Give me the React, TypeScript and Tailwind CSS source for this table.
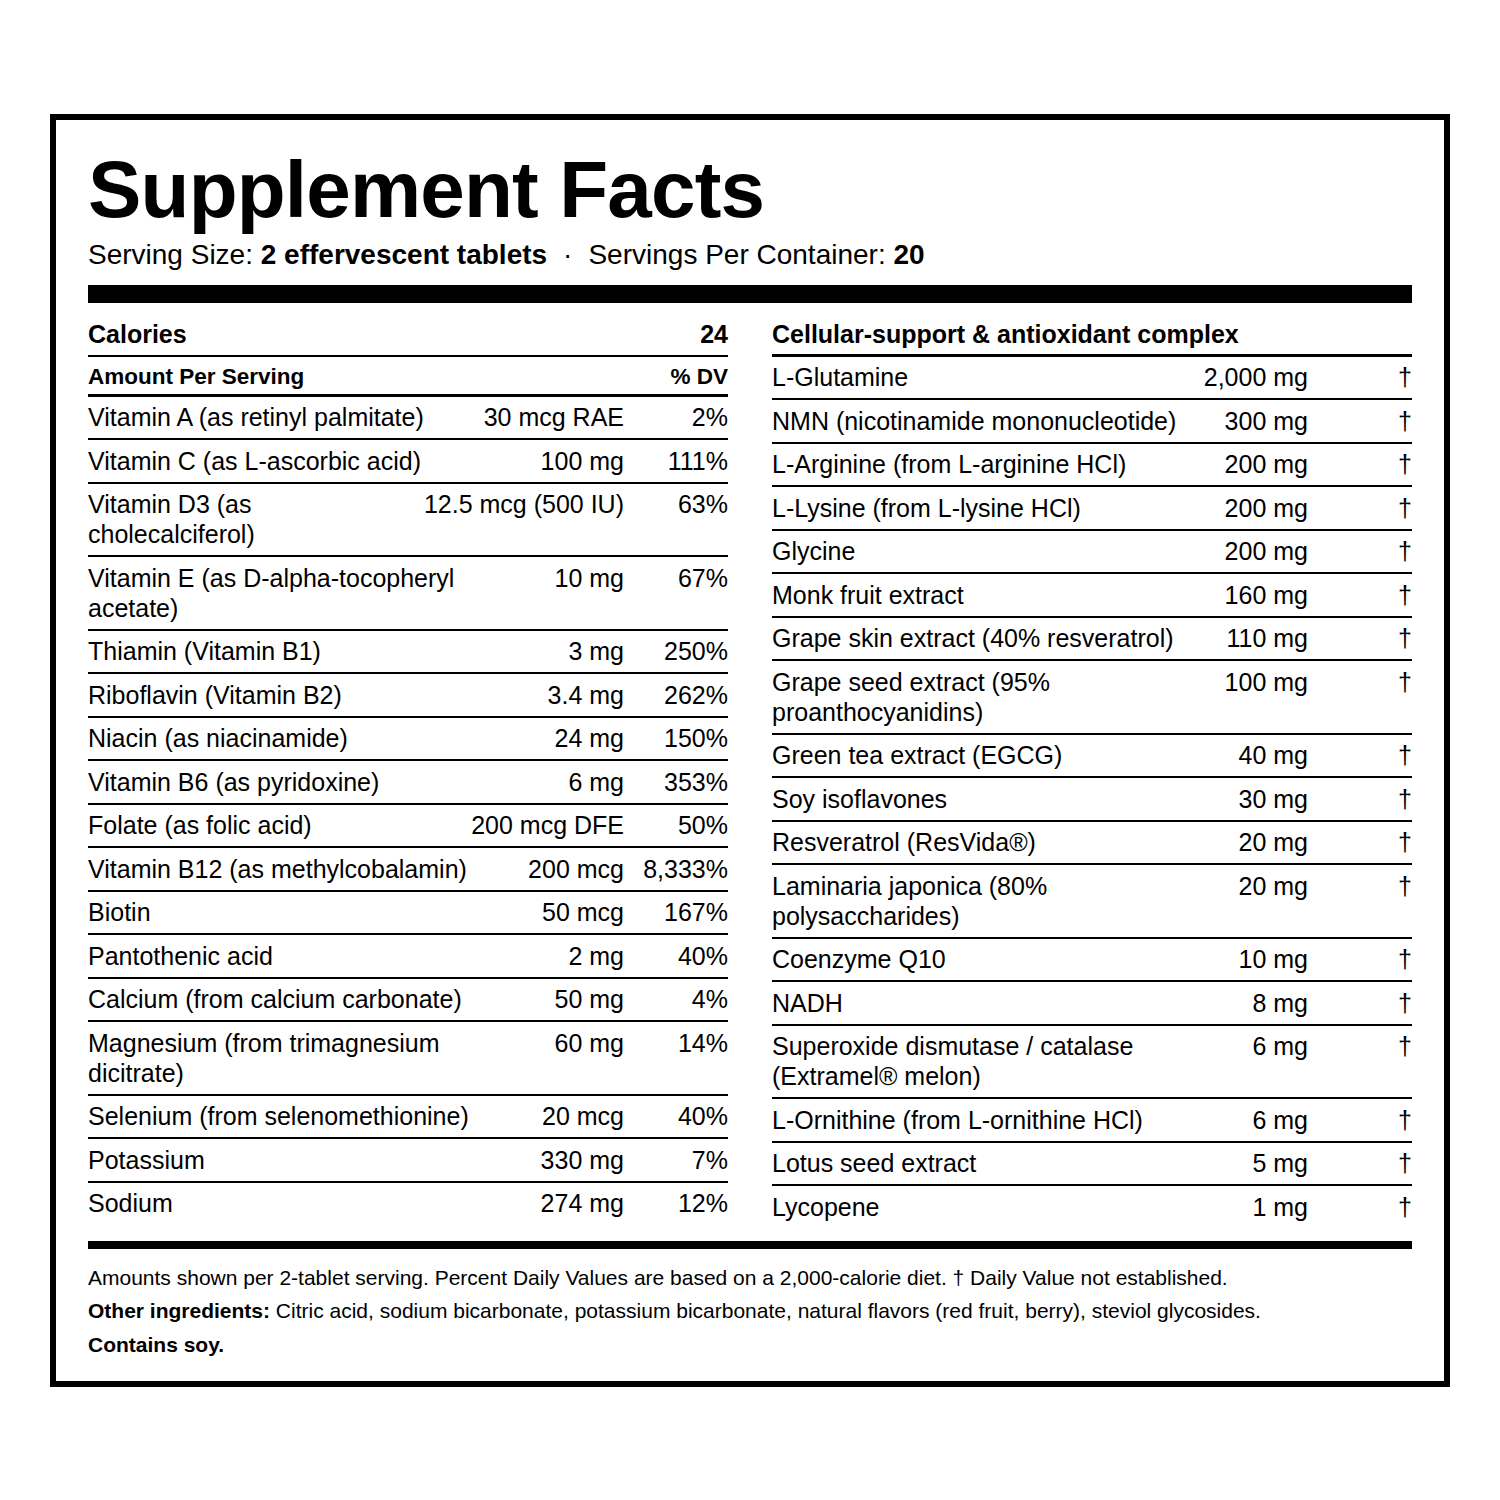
import React from "react";

type R = [string, string, string];

const left: R[] = [
  ["Vitamin A (as retinyl palmitate)", "30 mcg RAE", "2%"],
  ["Vitamin C (as L-ascorbic acid)", "100 mg", "111%"],
  ["Vitamin D3 (as cholecalciferol)", "12.5 mcg (500 IU)", "63%"],
  ["Vitamin E (as D-alpha-tocopheryl acetate)", "10 mg", "67%"],
  ["Thiamin (Vitamin B1)", "3 mg", "250%"],
  ["Riboflavin (Vitamin B2)", "3.4 mg", "262%"],
  ["Niacin (as niacinamide)", "24 mg", "150%"],
  ["Vitamin B6 (as pyridoxine)", "6 mg", "353%"],
  ["Folate (as folic acid)", "200 mcg DFE", "50%"],
  ["Vitamin B12 (as methylcobalamin)", "200 mcg", "8,333%"],
  ["Biotin", "50 mcg", "167%"],
  ["Pantothenic acid", "2 mg", "40%"],
  ["Calcium (from calcium carbonate)", "50 mg", "4%"],
  ["Magnesium (from trimagnesium dicitrate)", "60 mg", "14%"],
  ["Selenium (from selenomethionine)", "20 mcg", "40%"],
  ["Potassium", "330 mg", "7%"],
  ["Sodium", "274 mg", "12%"],
];

const right: R[] = [
  ["L-Glutamine", "2,000 mg", "†"],
  ["NMN (nicotinamide mononucleotide)", "300 mg", "†"],
  ["L-Arginine (from L-arginine HCl)", "200 mg", "†"],
  ["L-Lysine (from L-lysine HCl)", "200 mg", "†"],
  ["Glycine", "200 mg", "†"],
  ["Monk fruit extract", "160 mg", "†"],
  ["Grape skin extract (40% resveratrol)", "110 mg", "†"],
  ["Grape seed extract (95% proanthocyanidins)", "100 mg", "†"],
  ["Green tea extract (EGCG)", "40 mg", "†"],
  ["Soy isoflavones", "30 mg", "†"],
  ["Resveratrol (ResVida®)", "20 mg", "†"],
  ["Laminaria japonica (80% polysaccharides)", "20 mg", "†"],
  ["Coenzyme Q10", "10 mg", "†"],
  ["NADH", "8 mg", "†"],
  ["Superoxide dismutase / catalase (Extramel® melon)", "6 mg", "†"],
  ["L-Ornithine (from L-ornithine HCl)", "6 mg", "†"],
  ["Lotus seed extract", "5 mg", "†"],
  ["Lycopene", "1 mg", "†"],
];

function Row({ r, last }: { r: R; last: boolean }) {
  return (
    <div
      className={
        last
          ? "flex items-start gap-[18px] py-[5.75px] text-[25px] leading-[30px]"
          : "flex items-start gap-[18px] py-[5.75px] text-[25px] leading-[30px] border-b-2 border-black"
      }
    >
      <div className="min-w-0 flex-1">{r[0]}</div>
      <div className="shrink-0 whitespace-nowrap text-right">{r[1]}</div>
      <div className="w-[86px] shrink-0 whitespace-nowrap text-right">{r[2]}</div>
    </div>
  );
}

export default function App() {
  return (
    <div className="min-h-screen bg-white px-[50px] pt-[114px] pb-10 text-black font-['Liberation_Sans',Arial,Helvetica,sans-serif]">
      <div className="border-[6px] border-black px-8 pt-[30px] pb-[20px]">
        <h1 className="text-[80px] font-bold leading-none tracking-[-0.01em]">Supplement Facts</h1>
        <p className="mt-2 text-[28px] leading-[1.2]">
          Serving Size: <span className="font-bold">2 effervescent tablets</span>
          <span className="mx-4">·</span>
          Servings Per Container: <span className="font-bold">20</span>
        </p>
        <div className="mt-[13px] h-[18px] bg-black" />

        <div className="mt-[10px] grid grid-cols-2 items-start gap-x-[44px]">
          <div className="flex flex-col">
            <div className="flex justify-between border-b-2 border-black py-[6px] text-[25px] font-bold leading-[30px]">
              <span>Calories</span>
              <span>24</span>
            </div>
            <div className="flex justify-between border-b-[3px] border-black pt-[6px] pb-[4px] text-[22.5px] font-bold leading-[27px]">
              <span>Amount Per Serving</span>
              <span>% DV</span>
            </div>
            {left.map((r, i) => (
              <Row key={r[0]} r={r} last={i === left.length - 1} />
            ))}
          </div>
          <div className="flex flex-col">
            <div className="border-b-[3px] border-black pt-[6px] pb-[5px] text-[25px] font-bold leading-[30px]">
              Cellular-support &amp; antioxidant complex
            </div>
            {right.map((r, i) => (
              <Row key={r[0]} r={r} last={i === right.length - 1} />
            ))}
          </div>
        </div>

        <div className="mt-[13px] h-2 bg-black" />

        <div className="mt-3 text-[21px] leading-[33.6px]">
          <p>
            Amounts shown per 2-tablet serving. Percent Daily Values are based on a 2,000-calorie diet. † Daily Value
            not established.
          </p>
          <p>
            <span className="font-bold">Other ingredients:</span> Citric acid, sodium bicarbonate, potassium
            bicarbonate, natural flavors (red fruit, berry), steviol glycosides.
          </p>
          <p className="font-bold">Contains soy.</p>
        </div>
      </div>
    </div>
  );
}
